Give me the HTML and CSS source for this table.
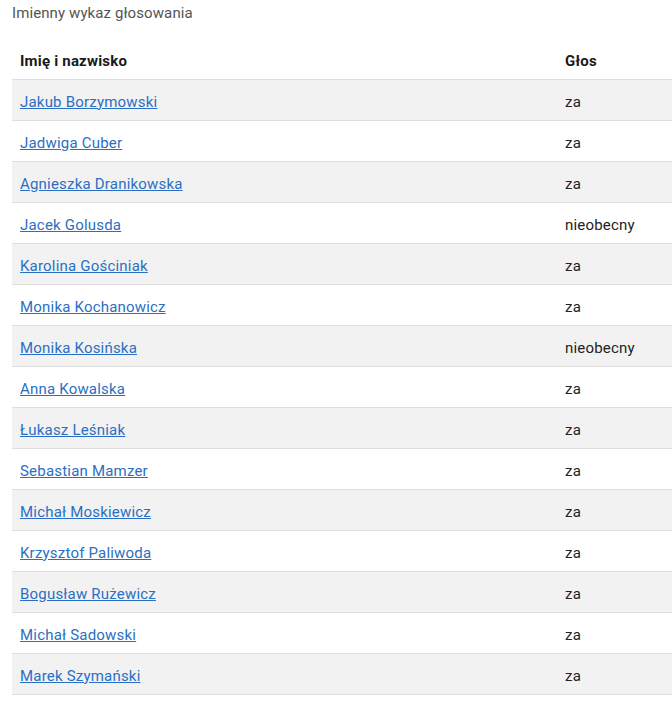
FILE: index.html
```html
<!DOCTYPE html>
<html lang="pl">
<head>
<meta charset="utf-8">
<link rel="stylesheet" href="styles.css">
</head>
<body>
<div class="wrap">
  <div class="title">Imienny wykaz głosowania</div>
  <table class="votes">
    <thead>
      <tr><th class="name">Imię i nazwisko</th><th class="vote">Głos</th></tr>
    </thead>
    <tbody>
      <tr><td><a href="#">Jakub Borzymowski</a></td><td>za</td></tr>
      <tr><td><a href="#">Jadwiga Cuber</a></td><td>za</td></tr>
      <tr><td><a href="#">Agnieszka Dranikowska</a></td><td>za</td></tr>
      <tr><td><a href="#">Jacek Golusda</a></td><td>nieobecny</td></tr>
      <tr><td><a href="#">Karolina Gościniak</a></td><td>za</td></tr>
      <tr><td><a href="#">Monika Kochanowicz</a></td><td>za</td></tr>
      <tr><td><a href="#">Monika Kosińska</a></td><td>nieobecny</td></tr>
      <tr><td><a href="#">Anna Kowalska</a></td><td>za</td></tr>
      <tr><td><a href="#">Łukasz Leśniak</a></td><td>za</td></tr>
      <tr><td><a href="#">Sebastian Mamzer</a></td><td>za</td></tr>
      <tr><td><a href="#">Michał Moskiewicz</a></td><td>za</td></tr>
      <tr><td><a href="#">Krzysztof Paliwoda</a></td><td>za</td></tr>
      <tr><td><a href="#">Bogusław Rużewicz</a></td><td>za</td></tr>
      <tr><td><a href="#">Michał Sadowski</a></td><td>za</td></tr>
      <tr><td><a href="#">Marek Szymański</a></td><td>za</td></tr>
    </tbody>
  </table>
</div>
</body>
</html>
```
FILE: styles.css
```css
html, body {
  margin: 0;
  padding: 0;
  background: #ffffff;
}
body {
  font-family: "Roboto", "Liberation Sans", sans-serif;
  font-size: 15px;
  color: #222;
}
.wrap {
  padding: 4px 0 0 12px;
}
.title {
  color: #555;
  font-size: 15px;
  line-height: 18px;
  margin-bottom: 17px;
  letter-spacing: 0.1px;
}
.votes {
  width: 660px;
  border-collapse: collapse;
  letter-spacing: 0.2px;
}
.votes th {
  text-align: left;
  font-weight: 700;
  color: #1a1a1a;
  height: 40px;
  padding: 4px 8px 0;
  border-bottom: 1px solid #dedede;
  box-sizing: border-box;
}
.votes th.name { width: 545px; }
.votes td {
  height: 40px;
  padding: 4px 8px 0;
  border-bottom: 1px solid #dedede;
  color: #222;
  box-sizing: border-box;
}
.votes tbody tr { height: 41px; }
.votes tbody tr:nth-child(odd) td {
  background: #f2f2f2;
}
.votes a {
  color: #2a6fc4;
  text-decoration: underline;
}
```
